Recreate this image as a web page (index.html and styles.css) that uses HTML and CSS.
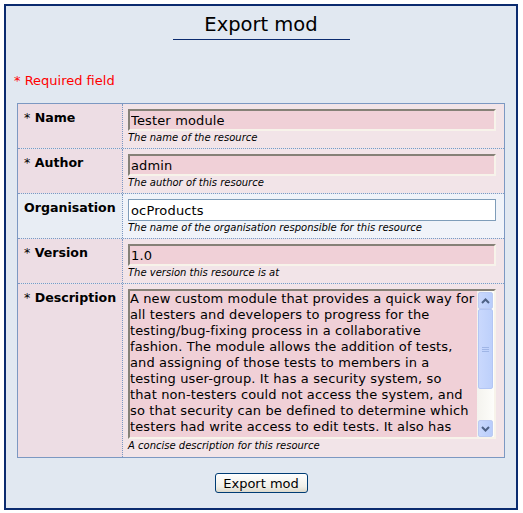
FILE: index.html
```html
<!DOCTYPE html>
<html>
<head>
<meta charset="utf-8">
<title>Export mod</title>
<link rel="stylesheet" href="styles.css">
</head>
<body>
<form class="box">
  <div class="title-wrap"><h1 class="title">Export mod</h1></div>
  <p class="required-note">* Required field</p>
  <div class="fields">
    <div class="row req">
      <div class="label"><span class="star">*</span> Name</div>
      <div class="value">
        <input class="inp inp-req" type="text" value="Tester module">
        <div class="help">The name of the resource</div>
      </div>
    </div>
    <div class="row req">
      <div class="label"><span class="star">*</span> Author</div>
      <div class="value">
        <input class="inp inp-req" type="text" value="admin">
        <div class="help">The author of this resource</div>
      </div>
    </div>
    <div class="row opt">
      <div class="label">Organisation</div>
      <div class="value">
        <input class="inp inp-opt" type="text" value="ocProducts">
        <div class="help">The name of the organisation responsible for this resource</div>
      </div>
    </div>
    <div class="row req">
      <div class="label"><span class="star">*</span> Version</div>
      <div class="value">
        <input class="inp inp-req" type="text" value="1.0">
        <div class="help">The version this resource is at</div>
      </div>
    </div>
    <div class="row req last">
      <div class="label"><span class="star">*</span> Description</div>
      <div class="value">
        <div class="ta-wrap">
          <textarea class="ta">A new custom module that provides a quick way for
all testers and developers to progress for the
testing/bug-fixing process in a collaborative
fashion. The module allows the addition of tests,
and assigning of those tests to members in a
testing user-group. It has a security system, so
that non-testers could not access the system, and
so that security can be defined to determine which
testers had write access to edit tests. It also has</textarea>
          <div class="sb">
            <div class="sb-btn">
              <svg width="9" height="6" viewBox="0 0 9 6"><path d="M1 5 L4.5 1.5 L8 5" fill="none" stroke="#4d6185" stroke-width="2"/></svg>
            </div>
            <div class="sb-track">
              <div class="sb-thumb">
                <svg width="7" height="7" viewBox="0 0 7 7"><path d="M0 1.5H7M0 3.5H7M0 5.5H7" stroke="#9fb5e6" stroke-width="1"/></svg>
              </div>
            </div>
            <div class="sb-btn">
              <svg width="9" height="6" viewBox="0 0 9 6"><path d="M1 1 L4.5 4.5 L8 1" fill="none" stroke="#4d6185" stroke-width="2"/></svg>
            </div>
          </div>
        </div>
        <div class="help">A concise description for this resource</div>
      </div>
    </div>
  </div>
  <div class="actions"><button type="button" class="btn">Export mod</button></div>
</form>
</body>
</html>
```

FILE: styles.css
```css
html, body {
  margin: 0;
  padding: 0;
  background: #ffffff;
}
body {
  padding: 4px 5px 4px 4px;
  font-family: "DejaVu Sans", Verdana, sans-serif;
  font-size: 13px;
  color: #000;
}
.box {
  display: block;
  margin: 0;
  border: 2px solid #0b2b6f;
  background: #e1e8f1;
  height: 502px;
}
.title-wrap {
  text-align: center;
  padding-top: 7px;
}
.title {
  display: inline-block;
  margin: 0;
  width: 177px;
  font-size: 19.5px;
  font-weight: normal;
  line-height: 24px;
  padding-bottom: 2px;
  border-bottom: 1px solid #0b2b6f;
}
.required-note {
  margin: 33px 0 0 8px;
  color: #ff0000;
  font-size: 13px;
  line-height: 16px;
}
.fields {
  width: 486px;
  margin: 14px auto 0 auto;
  border: 1px solid #7c98c2;
}
.row {
  display: grid;
  grid-template-columns: 105px 1fr;
  border-top: 1px dotted #7c98c2;
}
.row:first-child {
  border-top: none;
}
.label {
  padding: 6px 0 0 6px;
  line-height: 16px;
  font-size: 12.6px;
  font-weight: bold;
  white-space: nowrap;
  border-right: 1px dotted #7c98c2;
}
.star {
  font-weight: normal;
}
.value {
  padding: 5px 7px 4px 5px;
}
.last .value {
  padding-bottom: 5px;
}
.req .label { background: #eddde4; }
.req .value { background: #f2e4e8; }
.opt .label { background: #e8edf4; }
.opt .value { background: #f0f3f9; }
.inp {
  display: block;
  box-sizing: border-box;
  width: 368px;
  height: 22px;
  margin: 0;
  padding: 0 0 0 1px;
  font-family: "DejaVu Sans", Verdana, sans-serif;
  font-size: 13px;
  letter-spacing: 0.15px;
  color: #000;
  outline: none;
}
.inp-req {
  background: #f0d0d7;
  border-style: solid;
  border-width: 2px;
  border-color: #868177 #f7f3ea #f7f3ea #868177;
}
.inp-opt {
  background: #ffffff;
  border: 1px solid #7f9db9;
  padding-left: 2px;
}
.help {
  font-size: 10px;
  font-style: italic;
  line-height: 13px;
  height: 13px;
  white-space: nowrap;
}
.ta-wrap {
  display: flex;
  box-sizing: border-box;
  width: 368px;
  height: 150px;
  background: #f0d0d7;
  border-style: solid;
  border-width: 2px;
  border-color: #868177 #f7f3ea #f7f3ea #868177;
}
.ta {
  flex: 1;
  min-width: 0;
  margin: 0;
  padding: 0;
  border: none;
  background: transparent;
  resize: none;
  overflow: hidden;
  font-family: "DejaVu Sans", Verdana, sans-serif;
  font-size: 13px;
  letter-spacing: 0.12px;
  line-height: 16px;
  color: #000;
  outline: none;
}
.sb {
  width: 17px;
  display: flex;
  flex-direction: column;
  background: linear-gradient(to right, #f4f3ee, #fdfdfa);
  padding-top: 1px;
}
.sb-btn {
  height: 15px;
  margin: 0 1px;
  border: 1px solid #bccbf2;
  border-radius: 2px;
  background: linear-gradient(to right, #c9d8fc, #b8cdfb);
  display: flex;
  align-items: center;
  justify-content: center;
}
.sb-track {
  flex: 1;
  padding: 0;
}
.sb-thumb {
  height: 78px;
  margin: 0 1px;
  border: 1px solid #b3c6f4;
  border-radius: 2px;
  background: linear-gradient(to right, #c9d8fd, #bdd0fb);
  display: flex;
  align-items: center;
  justify-content: center;
}
.actions {
  text-align: center;
  padding-top: 15px;
}
.btn {
  width: 93px;
  height: 20px;
  padding: 0;
  font-family: "DejaVu Sans", Verdana, sans-serif;
  font-size: 13px;
  color: #000;
  border: 1px solid #003c74;
  border-radius: 3px;
  background: linear-gradient(to bottom, #ffffff, #f0efe8 70%, #dcd9cc);
}
```
